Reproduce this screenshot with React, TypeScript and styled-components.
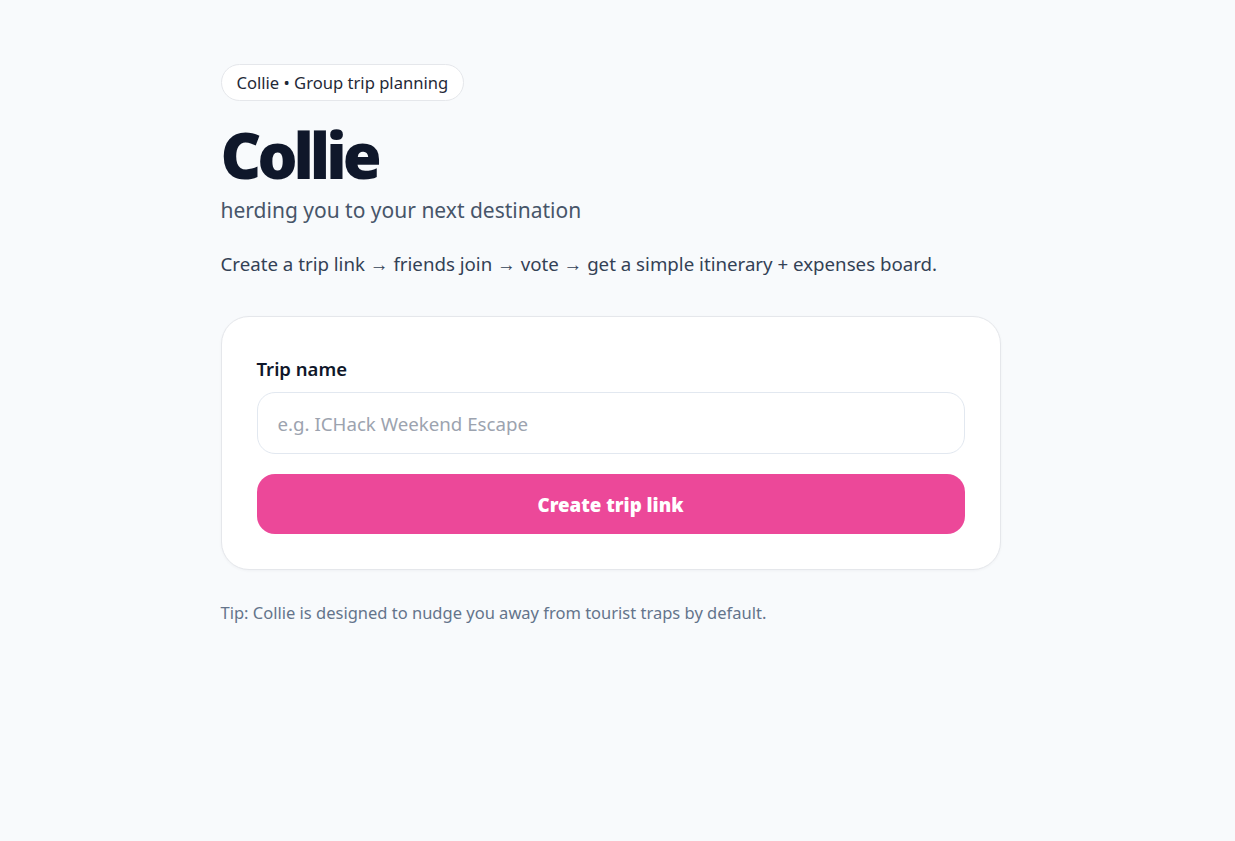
import styled, { createGlobalStyle } from 'styled-components';

const GlobalStyle = createGlobalStyle`
  html, body {
    margin: 0;
    padding: 0;
    background: #f8fafc;
  }
  body {
    font-family: 'Noto Sans', 'Open Sans', 'Liberation Sans', sans-serif;
    color: #0f172a;
  }
  * {
    box-sizing: border-box;
  }
`;

const Page = styled.main`
  min-height: 841px;
  padding: 64px 0;
`;

const Container = styled.div`
  width: 780px;
  margin: 0 auto 0 calc(50% - 397px);
  display: flex;
  flex-direction: column;
  align-items: flex-start;
`;

const Pill = styled.div`
  display: inline-flex;
  align-items: center;
  height: 37px;
  padding: 0 15px;
  border: 1px solid #e5e7eb;
  border-radius: 999px;
  background: #fff;
  font-size: 16.6px;
  color: #1f2937;
`;

const Title = styled.h1`
  margin: 12px 0 0;
  font-size: 63px;
  line-height: 84px;
  font-weight: 900;
  letter-spacing: -4px;
  color: #0f172a;
`;

const Subtitle = styled.p`
  margin: -2px 0 0;
  font-size: 21px;
  line-height: 30px;
  color: #475569;
`;

const Description = styled.p`
  margin: 25px 0 0;
  font-size: 18.7px;
  line-height: 28px;
  color: #334155;
`;

const Card = styled.section`
  width: 100%;
  margin-top: 38px;
  padding: 40px 35px 35px;
  background: #fff;
  border: 1px solid #e5e7eb;
  border-radius: 28px;
  box-shadow: 0 1px 3px rgba(15, 23, 42, 0.04);
  display: flex;
  flex-direction: column;
`;

const Label = styled.label`
  font-size: 18.5px;
  font-weight: 600;
  color: #0f172a;
  line-height: 24px;
`;

const Input = styled.input`
  margin-top: 11px;
  height: 62px;
  padding: 0 20px;
  border: 1px solid #e2e8f0;
  border-radius: 18px;
  font-family: inherit;
  font-size: 18.7px;
  color: #0f172a;
  outline: none;

  &::placeholder {
    color: #9ca3af;
  }
`;

const Button = styled.button`
  margin-top: 20px;
  height: 60px;
  border: none;
  border-radius: 18px;
  background: #ec4899;
  color: #fff;
  font-family: inherit;
  font-size: 18.7px;
  font-weight: 900;
  cursor: pointer;
`;

const Tip = styled.p`
  margin: 31px 0 0;
  font-size: 16.5px;
  line-height: 24px;
  color: #64748b;
`;

export default function App() {
  return (
    <>
      <GlobalStyle />
      <Page>
        <Container>
          <Pill>Collie • Group trip planning</Pill>
          <Title>Collie</Title>
          <Subtitle>herding you to your next destination</Subtitle>
          <Description>
            Create a trip link → friends join → vote → get a simple itinerary + expenses board.
          </Description>
          <Card>
            <Label htmlFor="trip-name">Trip name</Label>
            <Input id="trip-name" placeholder="e.g. ICHack Weekend Escape" />
            <Button type="button">Create trip link</Button>
          </Card>
          <Tip>Tip: Collie is designed to nudge you away from tourist traps by default.</Tip>
        </Container>
      </Page>
    </>
  );
}
